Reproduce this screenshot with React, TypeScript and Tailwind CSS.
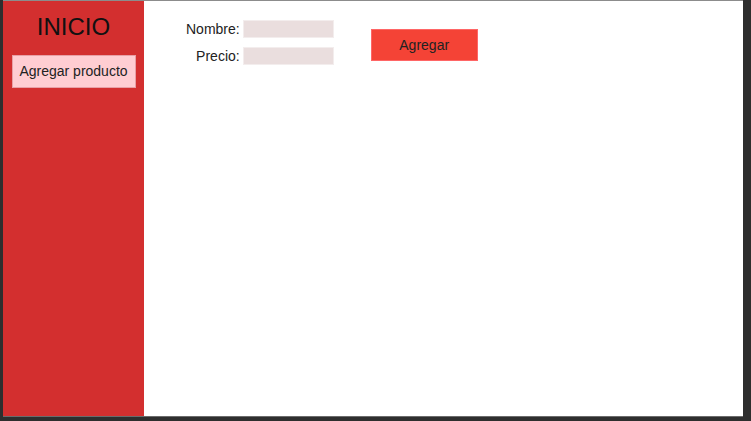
import React from "react";

export default function App() {
  return (
    <div
      className="w-[751px] h-[421px] bg-[#2e2e2e] pl-[3px] pr-[8px] pb-[4px] flex flex-col"
      style={{ fontFamily: '"Liberation Sans", Arial, sans-serif' }}
    >
      <div className="flex flex-1 border-t border-t-[#8c8c8c] border-b border-b-[#6b6b6b]">
        {/* Sidebar */}
        <aside className="w-[141px] bg-[#d32f2f] flex flex-col items-center pt-[12px]">
          <h1 className="text-[24px] leading-[28px] text-[#111]">INICIO</h1>
          <button className="mt-[14px] w-[124px] h-[33px] bg-[#ffcdd2] border border-[#e8a0a6] text-[14px] text-[#222]">
            Agregar producto
          </button>
        </aside>

        {/* Main */}
        <main className="flex-1 bg-white flex items-start pl-[42px] pt-[19px]">
          <div className="grid grid-cols-[auto_auto] gap-x-[3px] gap-y-[9px] items-center">
            <label className="text-[14px] leading-[18px] text-[#222] text-right">Nombre:</label>
            <input className="w-[91px] h-[18px] bg-[#eadede] border border-[#f3eded] outline-none" />
            <label className="text-[14px] leading-[18px] text-[#222] text-right">Precio:</label>
            <input className="w-[91px] h-[18px] bg-[#eadede] border border-[#f3eded] outline-none" />
          </div>
          <button className="ml-[37px] mt-[9px] w-[107px] h-[32px] bg-[#f44336] border border-[#f66] text-[14px] text-[#222]">
            Agregar
          </button>
        </main>
      </div>
    </div>
  );
}
